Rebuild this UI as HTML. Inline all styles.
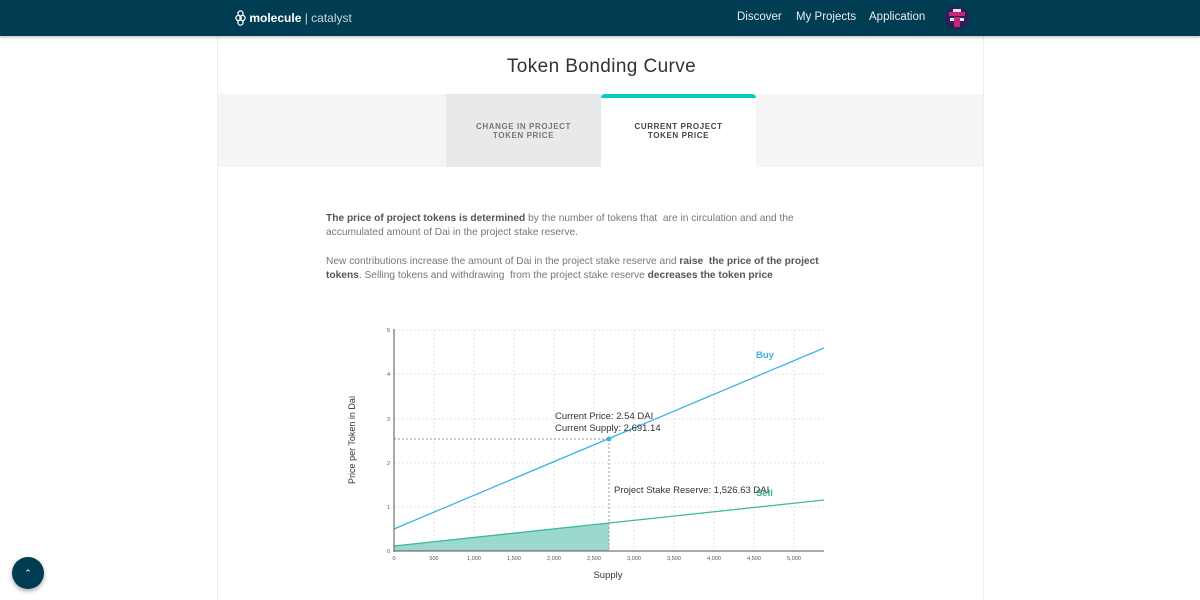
<!DOCTYPE html>
<html><head><style>
*{margin:0;padding:0;box-sizing:border-box}
body{width:1200px;height:600px;overflow:hidden;background:#fff;font-family:"Liberation Sans",sans-serif;position:relative}
.nav{position:absolute;left:0;top:0;width:1200px;height:36px;background:#003d52;box-shadow:0 1px 3px rgba(0,0,0,.3);z-index:2}
.logo{position:absolute;left:235px;top:10px;color:#fff;font-size:12px}
.logo b{font-weight:bold}
.logo span{color:#c8d6dc}
.links{position:absolute;top:11px;font-size:11.5px;color:#e6eef1}
.card{position:absolute;left:217px;top:36px;width:767px;height:564px;border-left:1px solid #eee;border-right:1px solid #eee;background:#fff}
h1{position:absolute;left:0;width:767px;top:20px;text-align:center;font-weight:normal;font-size:19px;letter-spacing:.4px;color:#333}
.tabbar{position:absolute;left:0;top:58px;width:765px;height:73px;background:#f5f5f5}
.tab{position:absolute;top:0;height:73px;font-size:8px;font-weight:bold;letter-spacing:.6px;text-align:center;padding-top:28px;line-height:9px}
p{position:absolute;left:108px;width:520px;font-size:10.2px;line-height:14px;color:#777}
p b{color:#555}
.fab{position:absolute;left:12px;top:557px;width:32px;height:32px;border-radius:50%;background:#003d52;box-shadow:0 2px 5px rgba(0,0,0,.35);color:#fff;font-size:9px;text-align:center;line-height:32px}
</style></head><body>
<div class="nav">
<div class="logo"><svg width="11" height="16" viewBox="0 0 11 16" style="vertical-align:-4px"><g fill="none" stroke="#fff" stroke-width="1.3"><circle cx="5.5" cy="3.5" r="2.6"/><circle cx="3.5" cy="8" r="2.6"/><circle cx="7.5" cy="8" r="2.6"/><circle cx="5.5" cy="12.5" r="2.6"/></g></svg> <b>molecule</b> <span>| catalyst</span></div>
<div class="links" style="left:737px">Discover</div>
<div class="links" style="left:796px">My Projects</div>
<div class="links" style="left:869px">Application</div>
<svg style="position:absolute;left:945px;top:6px" width="24" height="24" viewBox="0 0 24 24"><circle cx="12" cy="12" r="12" fill="#2b2055"/><rect x="4" y="6" width="16" height="4" fill="#c2277a"/><rect x="9" y="11" width="6" height="10" fill="#c2277a"/><rect x="5" y="12" width="4" height="3" fill="#e8e0f0"/><rect x="15" y="12" width="4" height="3" fill="#e8e0f0"/><rect x="8" y="3" width="8" height="3" fill="#e8e0f0"/></svg>
</div>
<div class="card">
<h1>Token Bonding Curve</h1>
<div class="tabbar">
<div class="tab" style="left:228px;width:155px;background:#e8e9eb;color:#777">CHANGE IN PROJECT<br>TOKEN PRICE</div>
<div class="tab" style="left:383px;width:155px;background:#fff;color:#444;border-top:4px solid #00cfc0;border-radius:4px 4px 0 0;padding-top:24px">CURRENT PROJECT<br>TOKEN PRICE</div>
</div>
<p style="top:176px"><b>The price of project tokens is determined</b> by the number of tokens that &nbsp;are in circulation and and the accumulated amount of Dai in the project stake reserve.</p>
<p style="top:219px">New contributions increase the amount of Dai in the project stake reserve and <b>raise &nbsp;the price of the project tokens</b>. Selling tokens and withdrawing &nbsp;from the project stake reserve <b>decreases the token price</b></p>
</div>
<svg style="position:absolute;left:0;top:0" width="1200" height="600" font-family="Liberation Sans,sans-serif">
<g stroke="#e4e4e4" stroke-dasharray="2,2" stroke-width="1">
<line x1="434" y1="330" x2="434" y2="551"/><line x1="474" y1="330" x2="474" y2="551"/><line x1="514" y1="330" x2="514" y2="551"/><line x1="554" y1="330" x2="554" y2="551"/><line x1="594" y1="330" x2="594" y2="551"/><line x1="634" y1="330" x2="634" y2="551"/><line x1="674" y1="330" x2="674" y2="551"/><line x1="714" y1="330" x2="714" y2="551"/><line x1="754" y1="330" x2="754" y2="551"/><line x1="794" y1="330" x2="794" y2="551"/>
<line x1="394" y1="330" x2="824" y2="330"/><line x1="394" y1="374" x2="824" y2="374"/><line x1="394" y1="419" x2="824" y2="419"/><line x1="394" y1="463" x2="824" y2="463"/><line x1="394" y1="507" x2="824" y2="507"/>
</g>
<polygon points="394,546 609,523 609,551 394,551" fill="#9bd9cc"/>
<line x1="394" y1="546" x2="824" y2="500" stroke="#3db89e" stroke-width="1.3"/>
<line x1="394" y1="529" x2="824" y2="348" stroke="#3bb4de" stroke-width="1.3"/>
<g stroke="#999" stroke-dasharray="2,2"><line x1="394" y1="439" x2="609" y2="439"/><line x1="609" y1="439" x2="609" y2="551"/></g>
<circle cx="609" cy="439" r="2.5" fill="#3bb4de"/>
<g stroke="#555" stroke-width="1"><line x1="394" y1="329" x2="394" y2="552"/><line x1="394" y1="551" x2="824" y2="551"/></g>
<g font-size="5.5" fill="#555" text-anchor="middle">
<text x="394" y="560">0</text><text x="434" y="560">500</text><text x="474" y="560">1,000</text><text x="514" y="560">1,500</text><text x="554" y="560">2,000</text><text x="594" y="560">2,500</text><text x="634" y="560">3,000</text><text x="674" y="560">3,500</text><text x="714" y="560">4,000</text><text x="754" y="560">4,500</text><text x="794" y="560">5,000</text>
</g>
<g font-size="5.5" fill="#555" text-anchor="end">
<text x="390" y="553">0</text><text x="390" y="509">1</text><text x="390" y="465">2</text><text x="390" y="421">3</text><text x="390" y="376">4</text><text x="390" y="332">5</text>
</g>
<text x="608" y="578" font-size="9.5" fill="#333" text-anchor="middle">Supply</text>
<text transform="translate(355,440) rotate(-90)" font-size="9" fill="#333" text-anchor="middle">Price per Token in Dai</text>
<text x="756" y="358" font-size="9.5" fill="#3bb4de" font-weight="bold">Buy</text>
<text x="756" y="496" font-size="9.5" fill="#3db89e" font-weight="bold">Sell</text>
<text x="555" y="419" font-size="9.5" fill="#333">Current Price: 2.54 DAI</text>
<text x="555" y="431" font-size="9.5" fill="#333">Current Supply: 2,691.14</text>
<text x="614" y="493" font-size="9.5" fill="#333">Project Stake Reserve: 1,526.63 DAI</text>
</svg>
<div class="fab">&#8963;</div>
</body></html>
